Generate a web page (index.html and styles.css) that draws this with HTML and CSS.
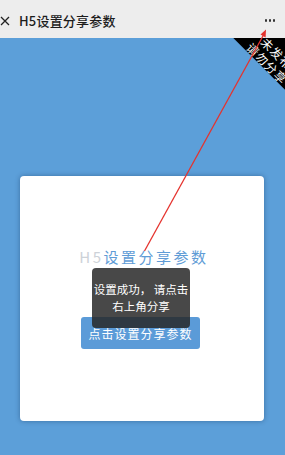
FILE: index.html
```html
<!DOCTYPE html>
<html lang="zh">
<head>
<meta charset="utf-8">
<link rel="stylesheet" href="styles.css">
</head>
<body>
<div class="page">
  <header class="nav">
    <svg class="close" width="10" height="10" viewBox="0 0 10 10"><path d="M1 1L9 9M9 1L1 9" stroke="#222" stroke-width="1.3" fill="none"/></svg>
    <span class="nav-title">H5设置分享参数</span>
    <span class="more"><i></i><i></i><i></i></span>
  </header>
  <main class="content">
    <div class="ribbon"><span>未发布</span><span>请勿分享</span></div>
    <section class="card">
      <h1 class="card-title"><span class="h5">H5</span>设置分享参数</h1>
      <button class="btn">点击设置分享参数</button>
    </section>
    <div class="toast">设置成功， 请点击<br>右上角分享</div>
  </main>
  <svg class="arrow" width="285" height="455" viewBox="0 0 285 455">
    <line x1="144.5" y1="251" x2="263.5" y2="35" stroke="#e5322d" stroke-width="1.3"/>
    <path d="M266 29.5 L265.6 37.5 L260.5 34.6 Z" fill="#e5322d"/>
  </svg>
</div>
</body>
</html>
```
FILE: styles.css
```css
* { box-sizing: border-box; }
html, body { margin: 0; padding: 0; }
body {
  width: 285px;
  height: 455px;
  overflow: hidden;
  font-family: "Noto Sans CJK SC", "Noto Sans", sans-serif;
  background: #5c9fd9;
}
.page { position: relative; width: 285px; height: 455px; }
.nav {
  height: 38px;
  background: #ededed;
  display: flex;
  align-items: center;
  padding: 3px 0 0 0;
  position: relative;
  z-index: 2;
}
.close { margin-left: 0; margin-right: 9px; display: block; }
.nav-title {
  font-size: 13px;
  font-weight: 500;
  color: #1c1c1c;
  line-height: 16px;
  letter-spacing: 0.2px;
}
.more {
  margin-left: auto;
  margin-right: 10px;
  display: flex;
  gap: 1.8px;
}
.more i {
  width: 2.2px;
  height: 2.2px;
  border-radius: 50%;
  background: #333;
  display: block;
}
.content {
  position: relative;
  height: 417px;
  overflow: hidden;
  background: #5c9fd9;
  padding-top: 138px;
}
.ribbon {
  position: absolute;
  right: -71px;
  top: -2px;
  width: 160px;
  height: 37px;
  background: #000;
  color: #fff;
  transform: rotate(45deg);
  display: flex;
  flex-direction: column;
  align-items: center;
  padding-top: 10px;
  font-size: 12px;
  line-height: 14px;
  letter-spacing: 1px;
}
.card {
  margin-left: 20px;
  width: 244px;
  height: 245px;
  background: #fff;
  border-radius: 4px;
  box-shadow: 0 0 5px rgba(20, 50, 90, 0.45);
  display: flex;
  flex-direction: column;
  align-items: center;
  padding-top: 71px;
}
.card-title {
  margin: 0;
  font-size: 15px;
  font-weight: 400;
  line-height: 20px;
  letter-spacing: 2.5px;
  color: #5f9cd6;
  padding-left: 4px;
}
.card-title .h5 { color: #cdd2d8; }
.btn {
  margin-top: 50px;
  width: 119px;
  height: 32px;
  border: none;
  border-radius: 3px;
  background: #5b9bd8;
  color: #fff;
  font-family: inherit;
  font-size: 12px;
  letter-spacing: 1px;
  padding: 0;
  margin-right: 3px;
}
.toast {
  position: absolute;
  left: 92px;
  top: 230px;
  width: 98px;
  height: 60px;
  border-radius: 4px;
  background: rgba(40, 40, 40, 0.85);
  color: #fff;
  font-size: 11.5px;
  line-height: 17px;
  text-align: center;
  padding-top: 13px;
  white-space: nowrap;
}
.arrow {
  position: absolute;
  left: 0;
  top: 0;
  z-index: 5;
  pointer-events: none;
}
```
